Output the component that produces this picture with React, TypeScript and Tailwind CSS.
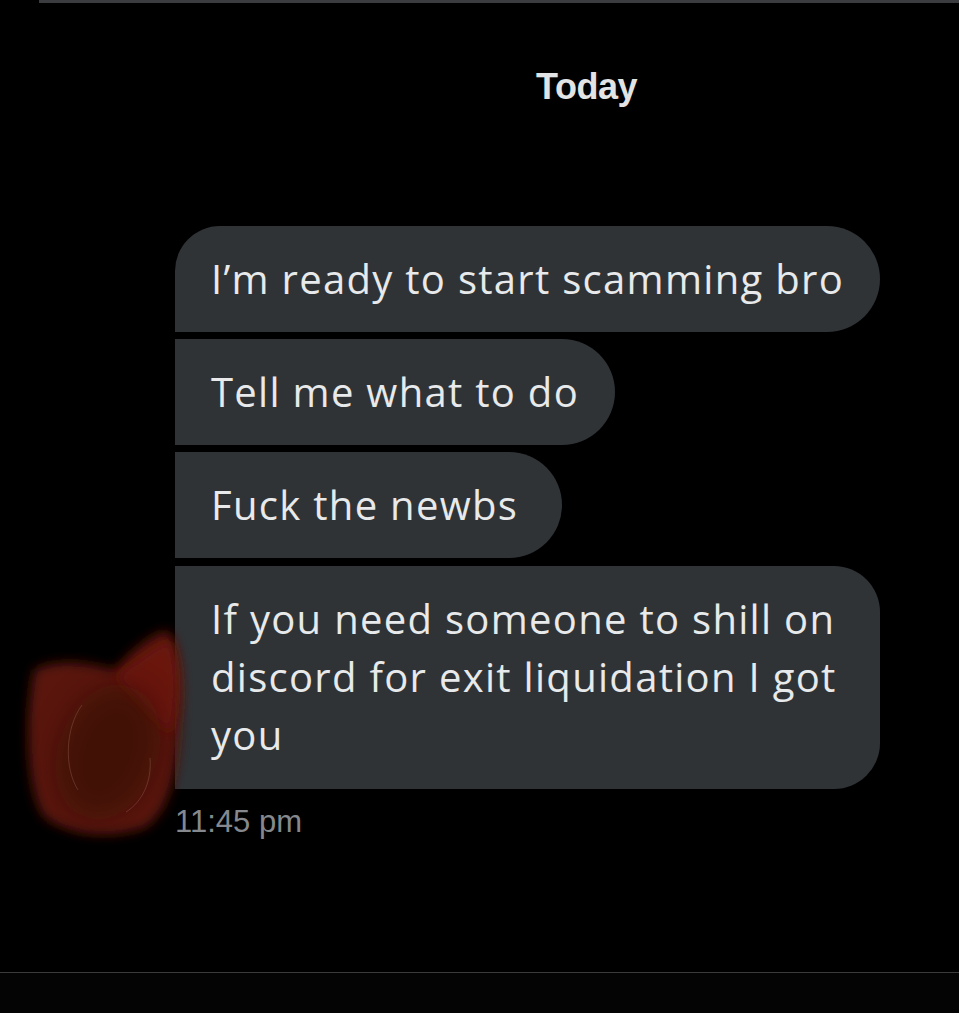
export default function App() {
  const bubbleText = "text-[40px] leading-[58px] text-[#e7e9ea] tracking-[1.3px]";
  return (
    <div className="relative flex h-[1013px] w-full flex-col overflow-hidden bg-black" style={{ fontFamily: '"Open Sans", "Noto Sans", sans-serif' }}>
      {/* top divider */}
      <div className="ml-[39px] h-[3px] bg-[#3b3c3f]" />

      {/* date header */}
      <div className="mt-[64px] pl-[214px] text-center">
        <span className="font-['Liberation_Sans',sans-serif] text-[36px] font-bold leading-[40px] tracking-[-0.5px] text-[#e2e3e4]">Today</span>
      </div>

      {/* messages */}
      <div className="ml-[175px] mt-[119px] flex flex-col items-start gap-[7px]">
        <div className={`rounded-r-[53px] rounded-tl-[45px] bg-[#2f3336] px-[36px] py-[24px] ${bubbleText}`}>
          I’m ready to start scamming bro
        </div>
        <div className={`rounded-r-[53px] bg-[#2f3336] px-[36px] py-[24px] ${bubbleText}`}>
          Tell me what to do
        </div>
        <div className={`rounded-r-[53px] bg-[#2f3336] pl-[36px] pr-[44px] py-[24px] ${bubbleText}`}>
          Fuck the newbs
        </div>
        <div className={`mt-[1px] w-[705px] rounded-r-[46px] bg-[#2f3336] px-[36px] pt-[24px] pb-[25px] ${bubbleText}`}>
          If you need someone to shill on
          <br />
          discord for exit liquidation I got
          <br />
          you
        </div>
        <div className="mt-[9px] font-['Liberation_Sans',sans-serif] text-[31px] leading-[34px] text-[#85898d]">11:45 pm</div>
      </div>

      <div className="flex-1" />
      <div className="h-px bg-[#3a3b3d]" />
      <div className="h-[40px] bg-[#040404]" />

      {/* red scribble over avatar */}
      <svg className="pointer-events-none absolute left-[10px] top-[610px]" width="200" height="245" viewBox="0 0 200 245">
        <defs>
          <filter id="blurA" x="-30%" y="-30%" width="160%" height="160%">
            <feGaussianBlur stdDeviation="6" />
          </filter>
          <filter id="blurB" x="-40%" y="-40%" width="180%" height="180%">
            <feGaussianBlur stdDeviation="14" />
          </filter>
        </defs>
        <path
          d="M24 60 C45 48 80 52 105 60 C120 42 138 26 157 20 C170 35 174 70 170 112 C168 162 160 202 135 218 C100 230 58 226 34 207 C16 182 14 110 24 60 Z"
          fill="#5a1207"
          filter="url(#blurA)"
        />
        <path
          d="M105 66 C128 50 148 35 160 30 C170 60 168 100 160 125 Z"
          fill="#6a1509"
          filter="url(#blurA)"
        />
        <ellipse cx="98" cy="142" rx="50" ry="70" transform="rotate(20 98 142)" fill="#2c0703" opacity="0.5" filter="url(#blurB)" />
        <path d="M72 95 C55 118 54 158 68 180" stroke="#b07a70" strokeWidth="1" fill="none" opacity="0.3" />
        <path d="M140 148 C142 172 132 192 116 202" stroke="#b07a70" strokeWidth="1" fill="none" opacity="0.3" />
      </svg>
    </div>
  );
}
